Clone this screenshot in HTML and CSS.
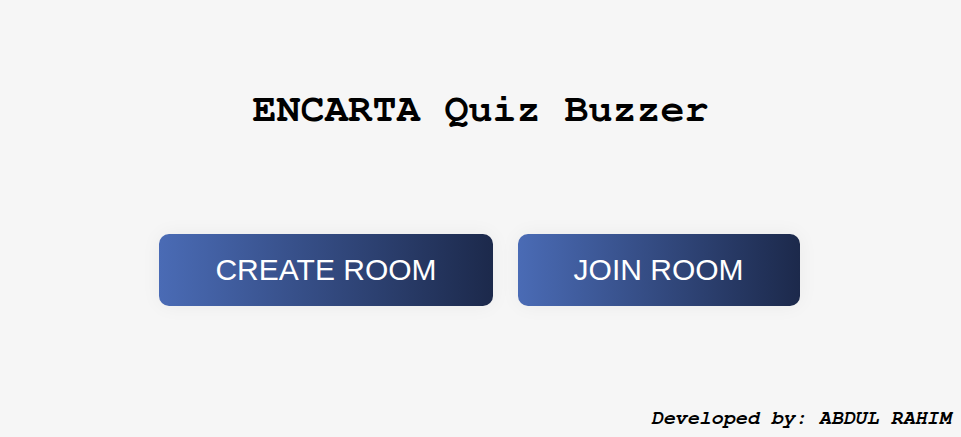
FILE: index.html
```html
<!DOCTYPE html>
<html>
<head>
<meta charset="utf-8">
<link rel="stylesheet" href="styles.css">
</head>
<body>
<div class="page">
  <h1 class="title">ENCARTA Quiz Buzzer</h1>
  <div class="actions">
    <button class="btn">CREATE ROOM</button>
    <button class="btn">JOIN ROOM</button>
  </div>
  <div class="footer">Developed by: ABDUL RAHIM</div>
</div>
</body>
</html>
```
FILE: styles.css
```css
html, body {
  margin: 0;
  padding: 0;
  background: #f6f6f6;
}
.page {
  height: 437px;
  display: flex;
  flex-direction: column;
  align-items: center;
}
.title {
  font-family: "Nimbus Mono PS", "Nimbus Mono L", "FreeMono", "Courier New", "Liberation Mono", monospace;
  font-weight: bold;
  font-size: 40px;
  line-height: 46px;
  margin: 86px 0 0 0;
  color: #000;
}
.actions {
  display: flex;
  gap: 25px;
  margin-top: 102px;
  margin-right: 2px;
}
.btn {
  font-family: "Liberation Sans", Arial, sans-serif;
  font-size: 30px;
  line-height: 36px;
  color: #fff;
  border: none;
  border-radius: 10px;
  padding: 18px 56px;
  background: linear-gradient(to right, #4a6bb5, #1c294b);
  box-shadow: 0 0 20px rgba(0, 0, 0, 0.05);
  cursor: pointer;
}
.footer {
  margin-top: auto;
  align-self: flex-end;
  margin-right: 10px;
  margin-bottom: 8px;
  font-family: "Nimbus Mono PS", "Nimbus Mono L", "FreeMono", "Courier New", "Liberation Mono", monospace;
  font-weight: bold;
  font-style: italic;
  font-size: 20px;
  line-height: 22px;
  color: #000;
}
```
